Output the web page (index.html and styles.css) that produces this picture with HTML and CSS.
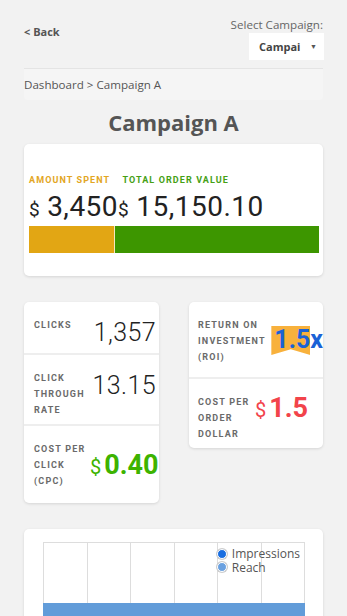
FILE: index.html
```html
<!DOCTYPE html>
<html lang="en">
<head>
    <meta charset="UTF-8">
    <title>Campaign A</title>
    <link rel="stylesheet" href="styles.css">
</head>
<body>
<div class="page">
    <div class="top">
        <a class="back">&lt; Back</a>
        <div class="picker">
            <div class="picker-label">Select Campaign:</div>
            <div class="select"><span>Campai</span><span class="caret">&#9660;</span></div>
        </div>
    </div>
    <div class="crumbs">Dashboard &gt; Campaign A</div>
    <h1 class="title">Campaign A</h1>

    <!-- spent vs order value -->
    <div class="card spend">
        <div class="spend-labels">
            <span class="lbl orange">AMOUNT SPENT</span>
            <span class="lbl green">TOTAL ORDER VALUE</span>
        </div>
        <div class="spend-values"><span class="cur">$</span> 3,450<span class="cur">$</span> 15,150.10</div>
        <div class="bar">
            <div class="bar-spent"></div>
            <div class="bar-total"></div>
        </div>
    </div>

    <div class="stats">
        <div class="card card-left">
            <div class="row">
                <div class="lbl grey">CLICKS</div>
                <div class="num">1,357</div>
            </div>
            <div class="row">
                <div class="lbl grey">CLICK THROUGH RATE</div>
                <div class="num">13.15</div>
            </div>
            <div class="row">
                <div class="lbl grey">COST PER CLICK (CPC)</div>
                <div class="num money cpc"><span class="cur">$</span>0.40</div>
            </div>
        </div>
        <div class="card card-right">
            <div class="row row-roi">
                <div class="lbl grey">RETURN ON INVESTMENT (ROI)</div>
                <div class="num roi"><span class="ribbon">1.5</span>x</div>
            </div>
            <div class="row">
                <div class="lbl grey">COST PER ORDER DOLLAR</div>
                <div class="num money cpo"><span class="cur">$</span>1.5</div>
            </div>
        </div>
    </div>

    <!-- impressions / reach chart -->
    <div class="card chart-card">
        <div class="chart">
            <div class="grid">
                <div></div><div></div><div></div><div></div><div></div><div></div>
            </div>
            <ul class="legend">
                <li><i class="dot dot-imp"></i>Impressions</li>
                <li><i class="dot dot-reach"></i>Reach</li>
            </ul>
            <div class="chart-bar"></div>
        </div>
    </div>
</div>
</body>
</html>
```

FILE: styles.css
```css
* {
    padding: 0;
    margin: 0;
    list-style: none;
    box-sizing: border-box;
}

body {
    background: #f2f2f2;
    font-family: "Open Sans", "Liberation Sans", sans-serif;
    color: #555;
}

.page {
    padding: 0 24px 0 24px;
}

.top {
    display: flex;
    justify-content: space-between;
    align-items: flex-start;
    padding-top: 17px;
    padding-bottom: 8px;
    border-bottom: 1px solid #e4e4e4;
}

.back {
    margin-top: 7px;
    font-size: 11px;
    font-weight: bold;
    line-height: 16px;
    color: #555;
}

.picker {
    display: flex;
    flex-direction: column;
    align-items: flex-end;
}

.picker-label {
    font-size: 11.6px;
    line-height: 16px;
    color: #666;
}

.select {
    width: 75px;
    height: 27px;
    margin-right: -1px;
    background: #fff;
    display: flex;
    align-items: center;
    justify-content: space-between;
    padding: 0 7px 0 10px;
    font-size: 11px;
    font-weight: bold;
    color: #444;
}

.caret {
    font-size: 7px;
    color: #555;
}

.crumbs {
    height: 31px;
    line-height: 31px;
    font-size: 11.6px;
    color: #555;
    background: #f5f5f5;
    border-radius: 0 0 4px 4px;
}

.title {
    margin: 8px 0 8px 0;
    text-align: center;
    font-size: 22px;
    line-height: 28px;
    font-weight: bold;
    color: #555;
}

.card {
    background: #fff;
    border-radius: 5px;
    box-shadow: 0 1px 3px rgba(0, 0, 0, 0.12);
}

.lbl {
    font-family: Roboto, "Liberation Sans", sans-serif;
    font-size: 9px;
    font-weight: bold;
    letter-spacing: 1.2px;
}

.orange {
    color: #e3a623;
}

.green {
    color: #45a014;
}

.grey {
    flex-shrink: 0;
    color: #6a6a6a;
    line-height: 16px;
}

.spend {
    padding: 27px 4px 23px 5px;
}

.spend-labels {
    line-height: 12px;
    white-space: nowrap;
}

.spend-labels .orange {
    letter-spacing: 1.1px;
}

.spend-labels .green {
    margin-left: 8px;
    letter-spacing: 1.1px;
}

.spend-values {
    margin-top: 5px;
    font-family: Roboto, "Liberation Sans", sans-serif;
    font-size: 28px;
    font-weight: 400;
    line-height: 32px;
    color: #222;
    white-space: nowrap;
    letter-spacing: 0.5px;
}

.cur {
    font-size: 19px;
    font-weight: 400;
    letter-spacing: 0;
}

.bar {
    display: flex;
    height: 27px;
}

.bar-spent {
    width: 86px;
    background: #e2a614;
    border-right: 1px solid #f6e7c0;
}

.bar-total {
    flex: 1;
    background: #3d9600;
}

.stats {
    display: grid;
    grid-template-columns: 135px 134px;
    column-gap: 30px;
    align-items: start;
    margin-top: 26px;
}

.row {
    display: flex;
    justify-content: space-between;
    align-items: flex-start;
    padding: 15px 3px 6px 10px;
}

.row + .row {
    border-top: 2px solid #eeeeee;
}

.card-left {
    padding-bottom: 8px;
}

.card-left .lbl {
    width: 56px;
}

.card-right .row {
    padding-left: 9px;
    padding-right: 0;
}

.card-right .lbl {
    width: 71px;
}

.row-roi {
    padding-bottom: 12px;
}

.num {
    font-family: Roboto, "Liberation Sans", sans-serif;
    font-size: 25px;
    font-weight: 300;
    line-height: 28px;
    letter-spacing: 0.4px;
    color: #222;
    white-space: nowrap;
    margin-top: 2px;
}

.money {
    font-weight: bold;
    font-size: 27px;
    letter-spacing: 0;
}

.money .cur {
    font-weight: 400;
    font-size: 20px;
    margin-right: 3px;
}

.cpc {
    color: #3db300;
    margin-right: 3px;
    margin-top: 10px;
}

.cpo {
    color: #f2434a;
    margin-left: -15px;
    margin-right: 15px;
    margin-top: 0;
}

.roi {
    font-weight: bold;
    color: #1a62d6;
    font-size: 25px;
    margin-top: 9px;
    letter-spacing: 0;
}

.ribbon {
    display: inline-block;
    background: #f8b13c;
    padding: 0 0 0 3px;
    height: 29px;
    line-height: 28px;
    clip-path: polygon(0 0, 100% 0, 100% 100%, 50% 80%, 0 100%);
}

.chart-card {
    margin-top: 26px;
    padding: 13px 18px 0 19px;
}

.chart {
    position: relative;
    height: 90px;
    border-top: 1px solid #ddd;
}

.grid {
    display: grid;
    grid-template-columns: repeat(6, 1fr);
    height: 100%;
    border-left: 1px solid #ddd;
}

.grid div {
    border-right: 1px solid #ddd;
}

.chart-bar {
    position: absolute;
    left: 0;
    right: 0;
    top: 60px;
    bottom: 0;
    background: #629cd9;
}

.legend {
    position: absolute;
    top: 4px;
    right: 5px;
    font-size: 12px;
    line-height: 13.5px;
    color: #555;
}

.legend li {
    display: flex;
    align-items: center;
}

.dot {
    width: 10px;
    height: 10px;
    border-radius: 50%;
    border: 1px solid #fff;
    box-shadow: 0 0 0 1px #ccc;
    margin-right: 5px;
}

.dot-imp {
    background: #1a6ee0;
}

.dot-reach {
    background: #6ba1e0;
}
```
